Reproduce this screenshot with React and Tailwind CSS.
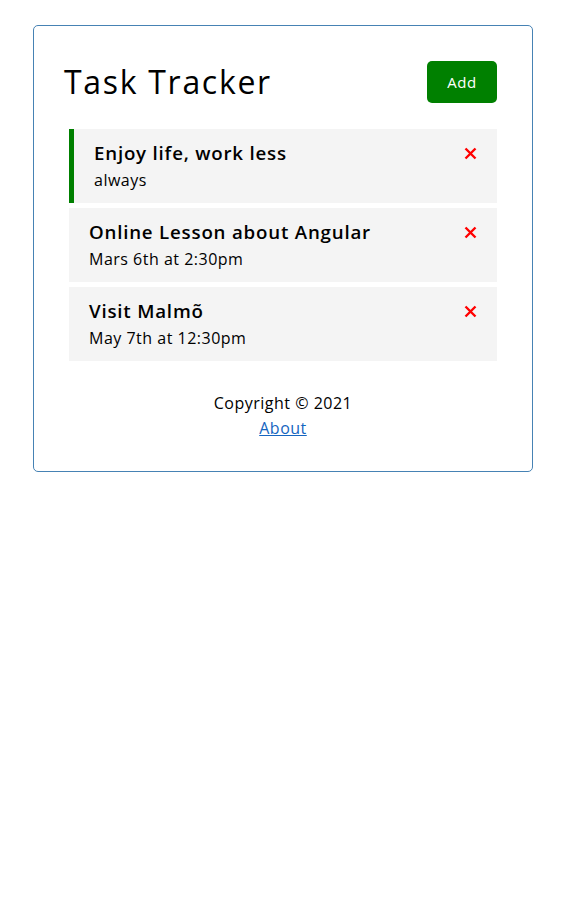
const tasks = [
  { id: 1, text: 'Enjoy life, work less', day: 'always', reminder: true },
  { id: 2, text: 'Online Lesson about Angular', day: 'Mars 6th at 2:30pm', reminder: false },
  { id: 3, text: 'Visit Malmõ', day: 'May 7th at 12:30pm', reminder: false },
];

function CloseIcon() {
  return (
    <svg width="13" height="13" viewBox="0 0 13 13" className="shrink-0">
      <path d="M1.5 1.5L11.5 11.5M11.5 1.5L1.5 11.5" stroke="#ff0000" strokeWidth="2.4" strokeLinecap="butt" />
    </svg>
  );
}

function Task({ task }) {
  return (
    <div
      className={`bg-[#f4f4f4] py-[10px] pr-[20px] pl-[20px] cursor-pointer ${
        task.reminder ? 'border-l-[5px] border-[#008000]' : ''
      }`}
    >
      <h3 className="flex items-center justify-between text-[18.7px] leading-[28px] font-semibold tracking-[0.8px]">
        {task.text}
        <CloseIcon />
      </h3>
      <p className="text-[16px] leading-[26px] tracking-[0.5px]">{task.day}</p>
    </div>
  );
}

export default function App() {
  return (
    <div className="min-h-screen bg-white text-black font-['Open_Sans',sans-serif] pt-[25px]">
      <div className="mx-auto w-[500px] border border-[#4682b4] rounded-[5px] p-[30px]">
        {/* Header */}
        <header className="flex items-center justify-between">
          <h1 className="text-[32px] leading-[48px] font-normal tracking-[1.7px]">Task Tracker</h1>
          <button className="m-[5px] h-[42px] w-[70px] bg-[#008000] text-white text-[15px] tracking-[0.5px] rounded-[5px]">
            Add
          </button>
        </header>

        {/* Tasks */}
        <div className="mt-[21px] mx-[5px] flex flex-col gap-[5px]">
          {tasks.map((task) => (
            <Task key={task.id} task={task} />
          ))}
        </div>

        {/* Footer */}
        <footer className="mt-[30px] text-center text-[16px] leading-[24px] tracking-[0.5px]">
          <p>Copyright © 2021</p>
          <div className="leading-[26px]">
            <a href="#" className="text-[#1565c0] underline">
              About
            </a>
          </div>
        </footer>
      </div>
    </div>
  );
}
